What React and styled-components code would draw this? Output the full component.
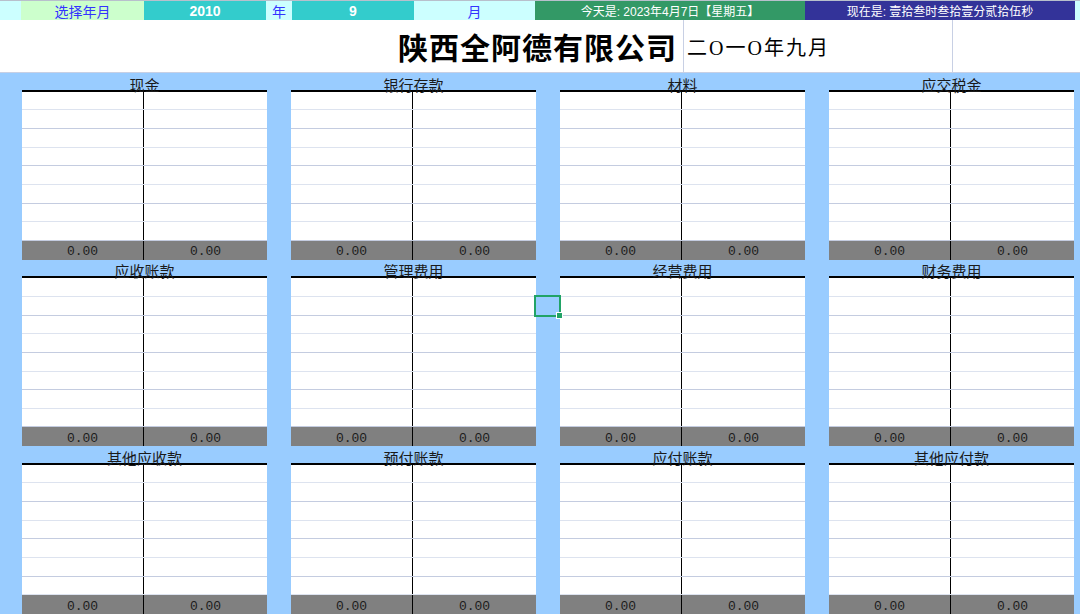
import React from 'react';
import styled, { createGlobalStyle } from 'styled-components';

const GlobalStyle = createGlobalStyle`
  html, body {
    margin: 0;
    padding: 0;
    height: 614px;
    overflow: hidden;
    background: #99ccff;
    font-family: "Liberation Sans", "Noto Sans CJK SC", sans-serif;
  }
`;

const ROW = 18.67;

const Sheet = styled.div`
  width: 1080px;
  height: 614px;
  overflow: hidden;
  display: flex;
  flex-direction: column;
`;

const TopBar = styled.div`
  flex-shrink: 0;
  display: grid;
  grid-template-columns: 21px 123px 122px 26px 122px 121px 270px 270px 5px;
  height: 19px;
  border-top: 1px solid #b8c0cc;
  background: #ccffff;
`;

const Seg = styled.div`
  display: flex;
  align-items: center;
  justify-content: center;
  background: ${p => p.bg || '#ccffff'};
  color: ${p => p.fg || '#3333ff'};
  font-size: ${p => p.size || 14}px;
  font-weight: ${p => (p.bold ? 700 : 400)};
  font-family: "Liberation Sans", "Noto Sans CJK SC", sans-serif;
  white-space: nowrap;
  overflow: hidden;
`;

const TitleRow = styled.div`
  flex-shrink: 0;
  display: grid;
  grid-template-columns: 683px 269px 128px;
  height: 52px;
  background: #fff;
  border-bottom: 1px solid #c8d0e4;
`;

const TitleCell = styled.div`
  display: flex;
  align-items: center;
  justify-content: ${p => p.align || 'flex-start'};
  padding: 0 ${p => p.pr || 0}px 0 ${p => p.pl || 0}px;
  border-left: ${p => (p.line ? '1px solid #c8d0e4' : 'none')};
`;

const Company = styled.span`
  font-family: "Liberation Serif", "Noto Sans CJK SC", serif;
  font-size: 30px;
  font-weight: 700;
  color: #000;
  letter-spacing: 1px;
`;

const Period = styled.span`
  font-family: "Liberation Serif", "Noto Sans CJK SC", serif;
  font-size: 20px;
  letter-spacing: 2px;
  color: #000;
`;

const Board = styled.div`
  position: relative;
  flex: 1;
  background: #99ccff;
  display: grid;
  grid-template-columns: repeat(4, 245px);
  column-gap: 24px;
  padding-left: 22px;
  align-content: start;
`;

const Ledger = styled.div`
  display: flex;
  flex-direction: column;
`;

const LedgerTitle = styled.div`
  height: ${ROW}px;
  display: flex;
  align-items: flex-end;
  justify-content: center;
  font-family: "Noto Sans CJK SC", sans-serif;
  font-size: 15px;
  line-height: 15px;
  color: #1a1a1a;
  margin-bottom: -2px;
  position: relative;
  z-index: 1;
`;

const Table = styled.div`
  border-top: 2px solid #000;
  background: #fff;
`;

const Line = styled.div`
  display: grid;
  grid-template-columns: 122px 123px;
  height: ${ROW}px;
  box-sizing: border-box;
  border-bottom: 1px solid ${p => (p.alt ? '#dde3ef' : '#c4cce0')};
`;

const Half = styled.div`
  border-right: ${p => (p.left ? '1px solid #000' : 'none')};
`;

const Footer = styled.div`
  display: grid;
  grid-template-columns: 122px 123px;
  height: ${ROW}px;
  background: #808080;
`;

const Amount = styled.div`
  display: flex;
  align-items: center;
  justify-content: center;
  font-family: "Liberation Mono", monospace;
  font-size: 13px;
  color: #1c1c1c;
  padding-top: 3px;
  border-right: ${p => (p.left ? '1px solid #000' : 'none')};
`;

const Selection = styled.div`
  position: absolute;
  left: 534px;
  top: 222px;
  width: 27px;
  height: 22px;
  box-sizing: border-box;
  border: 2px solid #21a366;

  &::after {
    content: '';
    position: absolute;
    right: -4px;
    bottom: -4px;
    width: 5px;
    height: 5px;
    background: #21a366;
    border: 1px solid #fff;
  }
`;

const accounts = [
  { name: '现金', rows: 8 },
  { name: '银行存款', rows: 8 },
  { name: '材料', rows: 8 },
  { name: '应交税金', rows: 8 },
  { name: '应收账款', rows: 8 },
  { name: '管理费用', rows: 8 },
  { name: '经营费用', rows: 8 },
  { name: '财务费用', rows: 8 },
  { name: '其他应收款', rows: 7 },
  { name: '预付账款', rows: 7 },
  { name: '应付账款', rows: 7 },
  { name: '其他应付款', rows: 7 },
];

function LedgerCard({ name, rows }) {
  return (
    <Ledger>
      <LedgerTitle>{name}</LedgerTitle>
      <Table>
        {Array.from({ length: rows }).map((_, i) => (
          <Line key={i} alt={i % 2 === 0}>
            <Half left />
            <Half />
          </Line>
        ))}
        <Footer>
          <Amount left>0.00</Amount>
          <Amount>0.00</Amount>
        </Footer>
      </Table>
    </Ledger>
  );
}

export default function App() {
  return (
    <Sheet>
      <GlobalStyle />
      <TopBar>
        <Seg />
        <Seg bg="#ccffcc">选择年月</Seg>
        <Seg bg="#33cccc" fg="#fff" bold>2010</Seg>
        <Seg>年</Seg>
        <Seg bg="#33cccc" fg="#fff" bold>9</Seg>
        <Seg>月</Seg>
        <Seg bg="#339966" fg="#fff" size={12}>今天是: 2023年4月7日【星期五】</Seg>
        <Seg bg="#333399" fg="#fff" size={12}>现在是: 壹拾叁时叁拾壹分贰拾伍秒</Seg>
        <Seg />
      </TopBar>
      <TitleRow>
        <TitleCell align="flex-end" pr={6}>
          <Company>陕西全阿德有限公司</Company>
        </TitleCell>
        <TitleCell line pl={3}>
          <Period>二O一O年九月</Period>
        </TitleCell>
        <TitleCell line />
      </TitleRow>
      <Board>
        {accounts.map(a => (
          <LedgerCard key={a.name} name={a.name} rows={a.rows} />
        ))}
        <Selection />
      </Board>
    </Sheet>
  );
}
